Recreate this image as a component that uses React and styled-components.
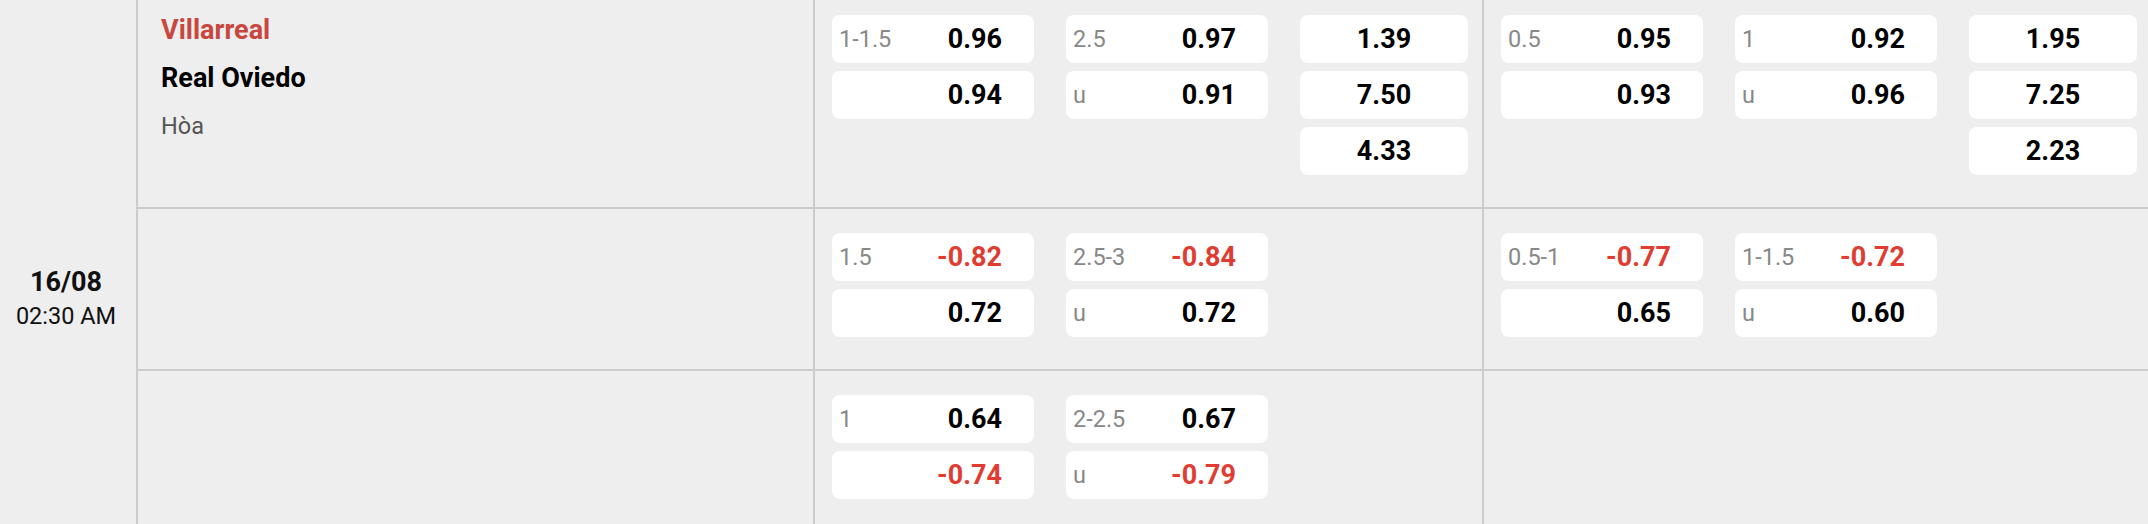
import React from "react";
import styled, { createGlobalStyle } from "styled-components";

const GlobalStyle = createGlobalStyle`
  *, *::before, *::after {
    box-sizing: border-box;
  }
  html, body {
    margin: 0;
    padding: 0;
    background: #eeeeee;
    overflow: hidden;
  }
  body {
    font-family: Roboto, "Liberation Sans", Arial, sans-serif;
    color: #000;
  }
`;

const MatchBlock = styled.div`
  display: flex;
  width: 2155px;
  margin-top: -9px;
`;

const DateCell = styled.div`
  width: 138px;
  flex: none;
  padding: 273px 4px 0 0;
  border-right: 2px solid #cccccc;
  text-align: center;
  color: #111;
`;

const DateText = styled.div`
  font-size: 27px;
  font-weight: 700;
  line-height: 36px;
`;

const TimeText = styled.div`
  font-size: 23.5px;
  line-height: 33px;
`;

const Rows = styled.div`
  flex: 1;
  display: flex;
  flex-direction: column;
`;

const OddsRow = styled.div`
  display: grid;
  grid-template-columns: 677px 669px 671px;
  border-bottom: 2px solid #cccccc;
`;

const TeamCell = styled.div`
  padding: 15px 0 0 23px;
  border-right: 2px solid #cccccc;
  display: flex;
  flex-direction: column;
`;

const TeamLine = styled.div`
  line-height: 48px;
  font-size: ${({ $draw }) => ($draw ? "23.5px" : "27px")};
  font-weight: ${({ $draw }) => ($draw ? 400 : 700)};
  color: ${({ $home, $draw }) => ($home ? "#c84840" : $draw ? "#555555" : "#000")};
`;

const MarketCell = styled.div`
  display: grid;
  grid-template-columns: 202px 202px 168px;
  column-gap: 32px;
  align-items: start;
  padding: 24px 0 32px 17px;
  border-right: ${({ $last }) => ($last ? "none" : "2px solid #cccccc")};
`;

const Stack = styled.div`
  display: flex;
  flex-direction: column;
  gap: 8px;
`;

const OddsBox = styled.div`
  height: 48px;
  display: flex;
  align-items: center;
  justify-content: ${({ $center }) => ($center ? "center" : "space-between")};
  padding: ${({ $center }) => ($center ? "0" : "0 32px 0 7px")};
  background: #ffffff;
  border-radius: 8px;
`;

const Label = styled.span`
  font-size: 23.5px;
  color: #888888;
`;

const Value = styled.span`
  font-size: 27px;
  font-weight: 700;
  color: ${({ $neg }) => ($neg ? "#e03c31" : "#000")};
`;

const rows = [
  {
    teams: ["Villarreal", "Real Oviedo", "Hòa"],
    markets: [
      {
        handicap: [["1-1.5", "0.96"], ["", "0.94"]],
        total: [["2.5", "0.97"], ["u", "0.91"]],
        x12: ["1.39", "7.50", "4.33"],
      },
      {
        handicap: [["0.5", "0.95"], ["", "0.93"]],
        total: [["1", "0.92"], ["u", "0.96"]],
        x12: ["1.95", "7.25", "2.23"],
      },
    ],
  },
  {
    markets: [
      {
        handicap: [["1.5", "-0.82"], ["", "0.72"]],
        total: [["2.5-3", "-0.84"], ["u", "0.72"]],
      },
      {
        handicap: [["0.5-1", "-0.77"], ["", "0.65"]],
        total: [["1-1.5", "-0.72"], ["u", "0.60"]],
      },
    ],
  },
  {
    markets: [
      {
        handicap: [["1", "0.64"], ["", "-0.74"]],
        total: [["2-2.5", "0.67"], ["u", "-0.79"]],
      },
      {},
    ],
  },
];

const PairStack = ({ items }) => (
  <Stack>
    {items.map(([label, value], i) => (
      <OddsBox key={i}>
        <Label>{label}</Label>
        <Value $neg={value.startsWith("-")}>{value}</Value>
      </OddsBox>
    ))}
  </Stack>
);

const Market = ({ market, last }) => (
  <MarketCell $last={last}>
    {market.handicap ? <PairStack items={market.handicap} /> : <div />}
    {market.total ? <PairStack items={market.total} /> : <div />}
    {market.x12 ? (
      <Stack>
        {market.x12.map((v) => (
          <OddsBox $center key={v}>
            <Value $neg={v.startsWith("-")}>{v}</Value>
          </OddsBox>
        ))}
      </Stack>
    ) : (
      <div />
    )}
  </MarketCell>
);

const App = () => {
  return (
    <>
      <GlobalStyle />
      <MatchBlock>
        <DateCell>
          <DateText>16/08</DateText>
          <TimeText>02:30 AM</TimeText>
        </DateCell>
        <Rows>
          {rows.map((row, i) => (
            <OddsRow key={i}>
              <TeamCell>
                {row.teams && (
                  <>
                    <TeamLine $home>{row.teams[0]}</TeamLine>
                    <TeamLine>{row.teams[1]}</TeamLine>
                    <TeamLine $draw>{row.teams[2]}</TeamLine>
                  </>
                )}
              </TeamCell>
              {row.markets.map((m, j) => (
                <Market key={j} market={m} last={j === row.markets.length - 1} />
              ))}
            </OddsRow>
          ))}
        </Rows>
      </MatchBlock>
    </>
  );
};

export default App;
